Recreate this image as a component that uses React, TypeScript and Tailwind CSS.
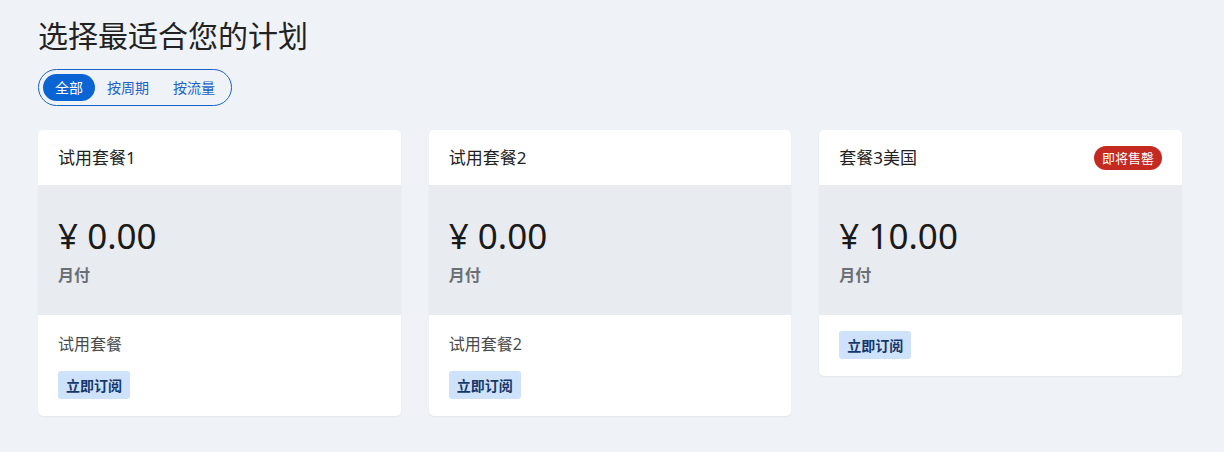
import { useState } from 'react';

const plans = [
  { name: '试用套餐1', price: '0.00', desc: '试用套餐', badge: '' },
  { name: '试用套餐2', price: '0.00', desc: '试用套餐2', badge: '' },
  { name: '套餐3美国', price: '10.00', desc: '', badge: '即将售罄' },
];

const tabs = ['全部', '按周期', '按流量'];

export default function App() {
  const [tab, setTab] = useState(0);
  return (
    <div
      className="min-h-[452px] bg-[#eff2f7] pl-[38px] pr-[42px] pt-[16px] pb-8 text-[#1d1d1f]"
      style={{ fontFamily: '"Noto Sans", "Noto Sans CJK SC", sans-serif' }}
    >
      <h1 className="text-[30px] leading-[40px] text-[#222]">选择最适合您的计划</h1>

      <div className="mt-[13px] inline-flex items-center rounded-full border border-[#1a62c7] p-[4px]">
        {tabs.map((t, i) => (
          <button
            key={t}
            onClick={() => setTab(i)}
            className={
              i === tab
                ? 'h-[27px] rounded-full bg-[#0b64d4] px-[12px] text-[14px] leading-[27px] text-white'
                : 'h-[27px] rounded-full px-[12px] text-[14px] leading-[27px] text-[#1a62c7]'
            }
          >
            {t}
          </button>
        ))}
      </div>

      <div className="mt-[24px] grid grid-cols-3 items-start gap-[28px]">
        {plans.map((p) => (
          <div key={p.name} className="overflow-hidden rounded-[5px] bg-white shadow-[0_1px_2px_rgba(0,0,0,0.05)]">
            <div className="flex h-[55px] items-center justify-between px-[20px]">
              <span className="text-[17px] text-[#222]">{p.name}</span>
              {p.badge && (
                <span className="rounded-full bg-[#c42a20] px-[8px] text-[13px] leading-[24px] text-white">
                  {p.badge}
                </span>
              )}
            </div>
            <div className="flex h-[130px] flex-col justify-center bg-[#e8ebef] px-[20px]">
              <div className="text-[35px] leading-[44px] text-[#1a1a1a]">¥ {p.price}</div>
              <div className="mt-[6px] text-[16px] font-bold leading-[22px] text-[#6b6f75]">月付</div>
            </div>
            <div className="px-[20px] pt-[16px] pb-[17px]">
              {p.desc && <div className="mb-[14px] text-[16px] leading-[26px] text-[#4a4a4a]">{p.desc}</div>}
              <button className="h-[28px] rounded-[3px] bg-[#cfe2fb] px-[8px] text-[14px] font-bold text-[#14386b]">
                立即订阅
              </button>
            </div>
          </div>
        ))}
      </div>
    </div>
  );
}
